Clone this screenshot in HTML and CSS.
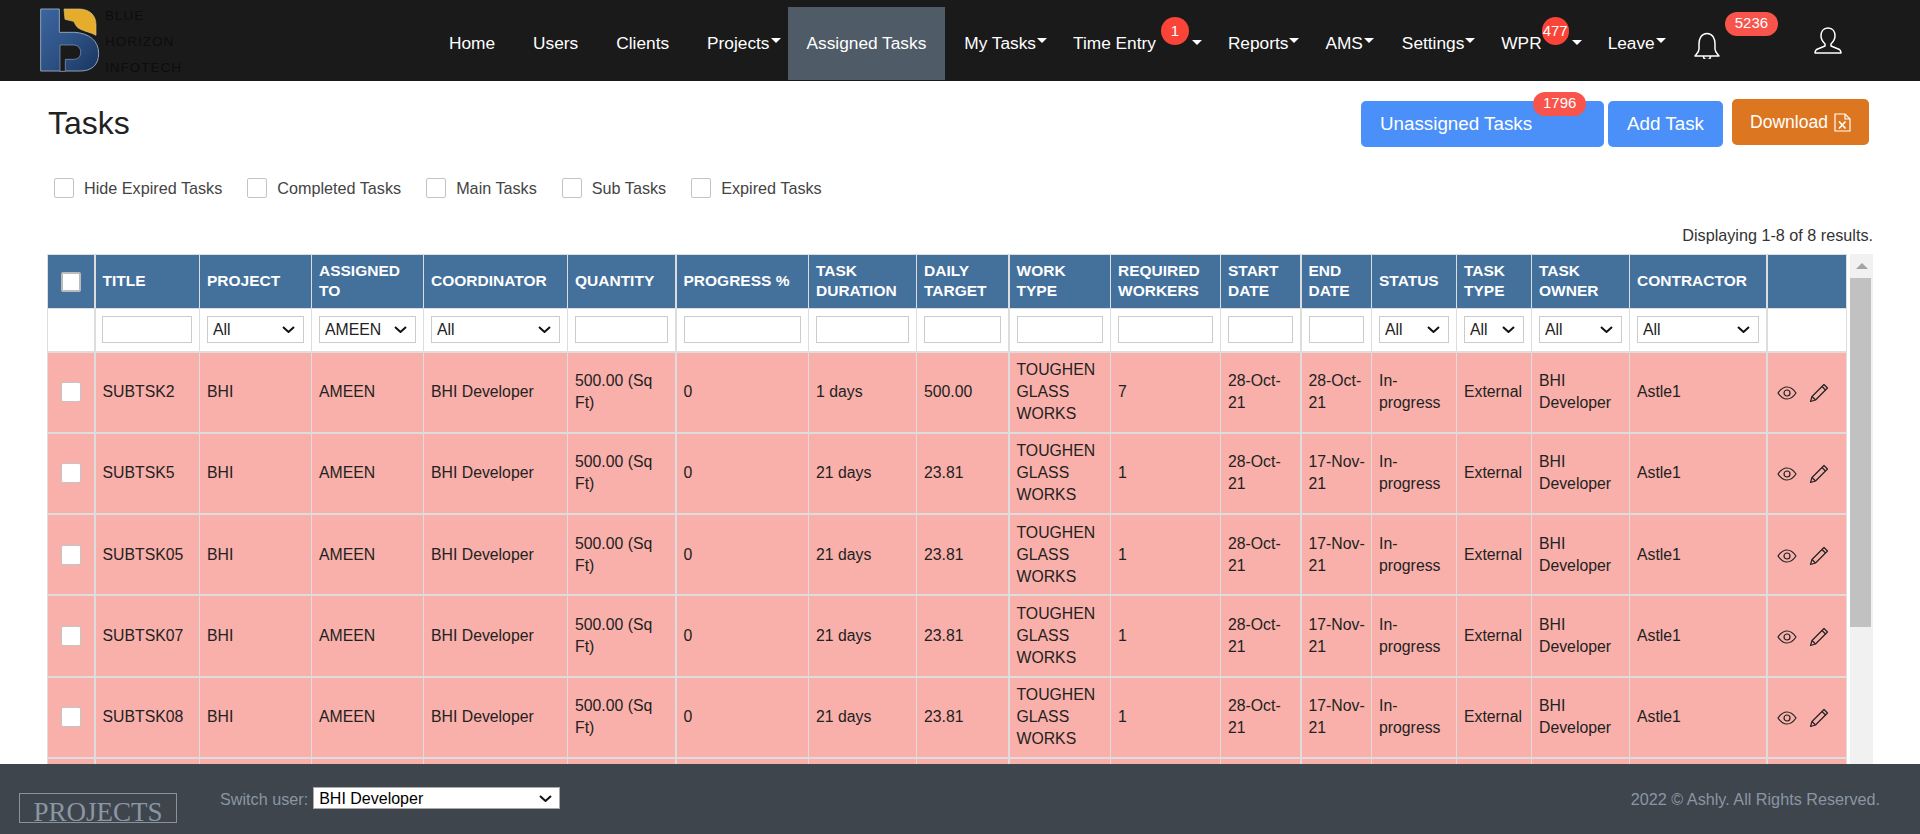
FILE: index.html
```html
<!DOCTYPE html>
<html lang="en">
<head>
<meta charset="utf-8">
<title>Tasks</title>
<link rel="stylesheet" href="styles.css">
</head>
<body>

<header class="topbar">
  <a class="logo" href="#">
    <svg class="logo-mark" viewBox="60 25 180 190" width="60" height="64">
      <defs>
        <linearGradient id="logoBlue" x1="0" y1="0" x2="1" y2="1">
          <stop offset="0" stop-color="#3c659f"/>
          <stop offset="0.55" stop-color="#2c5082"/>
          <stop offset="1" stop-color="#1a3560"/>
        </linearGradient>
      </defs>
      <path d="M62 27H118V97H165C205 100 236 120 236 160C236 195 215 213 180 213H62Z" fill="url(#logoBlue)" stroke="#8ea2ba" stroke-width="3"/>
      <path d="M120 135H160C174 135 182 145 182 157C182 170 174 178 160 178H136V214H120Z" fill="#1a1a1a" stroke="#8ea2ba" stroke-width="2"/>
      <path d="M132 27H180C212 29 228 48 228 75V106C212 96 190 94 175 84C166 78 165 68 160 64L135 58Z" fill="#e6ad2c" stroke="#d8c48c" stroke-width="2"/>
    </svg>
    <span class="logo-text">BLUE<br>HORIZON<br>INFOTECH</span>
  </a>
  <nav class="nav">
    <a class="nav-link" href="#">Home</a>
    <a class="nav-link" href="#">Users</a>
    <a class="nav-link" href="#">Clients</a>
    <a class="nav-link has-caret" href="#">Projects<i class="caret"></i></a>
    <a class="nav-link active" href="#">Assigned Tasks</a>
    <a class="nav-link has-caret" href="#">My Tasks<i class="caret"></i></a>
    <a class="nav-link has-caret" href="#">Time Entry<span class="nav-count time-count">1</span><i class="caret wide-caret"></i></a>
    <a class="nav-link has-caret" href="#">Reports<i class="caret"></i></a>
    <a class="nav-link has-caret ams-link" href="#">AMS<i class="caret"></i></a>
    <a class="nav-link has-caret" href="#">Settings<i class="caret"></i></a>
    <a class="nav-link has-caret" href="#">WPR<span class="nav-count wpr-count">477</span><i class="caret wide-caret"></i></a>
    <a class="nav-link has-caret" href="#">Leave<i class="caret"></i></a>
    <a class="bell" href="#">
      <svg viewBox="0 0 26 27" width="26" height="27" fill="none" stroke="#fff" stroke-width="1.5" stroke-linejoin="round">
        <path d="M13 1.5C7.5 1.5 5 6.5 5 12V17C5 20 3 21.500 1 24H25C23 21.500 21 20 21 17V12C21 6.500 18.500 1.500 13 1.500Z"/>
        <path d="M9.500 24C9.500 29 16.500 29 16.500 24"/>
      </svg>
      <span class="pill bell-count">5236</span>
    </a>
    <a class="user" href="#">
      <svg viewBox="0 0 28 27" width="28" height="27" fill="none" stroke="#fff" stroke-width="1.5" stroke-linejoin="round">
        <path d="M14 1C9 1 7 5 7 9C7 13 9 15 11 17V19L2.500 22.500C1.500 23.500 1 24.500 1 26H27C27 24.500 26.500 23.500 25.500 22.500L17 19V17C19 15 21 13 21 9C21 5 19 1 14 1Z"/>
      </svg>
    </a>
  </nav>
</header>

<main class="page">
  <div class="page-head">
    <h1>Tasks</h1>
    <div class="actions">
      <a class="btn btn-blue btn-unassigned" href="#">Unassigned Tasks<span class="pill btn-count">1796</span></a>
      <a class="btn btn-blue btn-add" href="#">Add Task</a>
      <a class="btn btn-orange" href="#">Download
        <svg viewBox="0 0 17 19" width="17" height="19" fill="none" stroke="#fff" stroke-width="1.2">
          <path d="M1 1H11L16 6V18H1Z"/>
          <path d="M11 1V6H16"/>
          <path d="M5 8.500L11.500 15.500M11.500 8.500L5 15.500" stroke-width="1.700"/>
        </svg>
      </a>
    </div>
  </div>

  <div class="filters">
    <label class="check"><input type="checkbox">Hide Expired Tasks</label>
    <label class="check"><input type="checkbox">Completed Tasks</label>
    <label class="check"><input type="checkbox">Main Tasks</label>
    <label class="check"><input type="checkbox">Sub Tasks</label>
    <label class="check"><input type="checkbox">Expired Tasks</label>
  </div>

  <p class="summary">Displaying 1-8 of 8 results.</p>

  <div class="grid-wrap">
    <table class="grid">
      <colgroup>
        <col class="c-check">
        <col class="c-title thick">
        <col class="c-project">
        <col class="c-assigned">
        <col class="c-coord">
        <col class="c-qty">
        <col class="c-progress thick">
        <col class="c-duration">
        <col class="c-target">
        <col class="c-work thick">
        <col class="c-workers">
        <col class="c-start">
        <col class="c-end thick">
        <col class="c-status">
        <col class="c-type">
        <col class="c-owner">
        <col class="c-contractor">
        <col class="c-actions thick">
      </colgroup>
      <thead>
        <tr class="head-row">
          <th class="center"><input type="checkbox"></th>
          <th>TITLE</th>
          <th>PROJECT</th>
          <th>ASSIGNED TO</th>
          <th>COORDINATOR</th>
          <th>QUANTITY</th>
          <th>PROGRESS %</th>
          <th>TASK DURATION</th>
          <th>DAILY TARGET</th>
          <th>WORK TYPE</th>
          <th>REQUIRED WORKERS</th>
          <th>START DATE</th>
          <th>END DATE</th>
          <th>STATUS</th>
          <th>TASK TYPE</th>
          <th>TASK OWNER</th>
          <th>CONTRACTOR</th>
          <th></th>
        </tr>
        <tr class="filter-row">
          <td></td>
          <td><input class="field title-field" type="text"></td>
          <td><select class="field"><option>All</option></select></td>
          <td><select class="field"><option>AMEEN</option></select></td>
          <td><select class="field"><option>All</option></select></td>
          <td><input class="field" type="text"></td>
          <td><input class="field" type="text"></td>
          <td><input class="field" type="text"></td>
          <td><input class="field" type="text"></td>
          <td><input class="field" type="text"></td>
          <td><input class="field" type="text"></td>
          <td><input class="field" type="text"></td>
          <td><input class="field" type="text"></td>
          <td><select class="field"><option>All</option></select></td>
          <td><select class="field"><option>All</option></select></td>
          <td><select class="field"><option>All</option></select></td>
          <td><select class="field"><option>All</option></select></td>
          <td></td>
        </tr>
      </thead>
      <tbody>
        <tr>
          <td class="center"><input type="checkbox"></td>
          <td>SUBTSK2</td><td>BHI</td><td>AMEEN</td><td>BHI Developer</td><td>500.00 (Sq Ft)</td><td>0</td>
          <td>1 days</td><td>500.00</td><td>TOUGHEN GLASS WORKS</td><td>7</td><td>28-Oct-21</td><td class="end-date">28-Oct-21</td>
          <td>In-progress</td><td>External</td><td>BHI Developer</td><td>Astle1</td>
          <td class="row-actions">
            <a href="#"><svg class="ico-eye" viewBox="0 0 20 14" width="20" height="14" fill="none" stroke="#222" stroke-width="1.200"><path d="M1 7C4 2.500 7 1 10 1S16 2.500 19 7C16 11.500 13 13 10 13S4 11.500 1 7Z"/><circle cx="10" cy="7" r="3"/></svg></a>
            <a href="#"><svg class="ico-pen" viewBox="0 0 20 20" width="20" height="20" fill="none" stroke="#222" stroke-width="1.200" stroke-linejoin="round"><path d="M15 1.500L18.500 5L6.500 17L1.500 18.500L3 13.500Z"/><path d="M13 3.500L16.500 7M3 13.500L6.500 17"/></svg></a>
          </td>
        </tr>
        <tr>
          <td class="center"><input type="checkbox"></td>
          <td>SUBTSK5</td><td>BHI</td><td>AMEEN</td><td>BHI Developer</td><td>500.00 (Sq Ft)</td><td>0</td>
          <td>21 days</td><td>23.81</td><td>TOUGHEN GLASS WORKS</td><td>1</td><td>28-Oct-21</td><td class="end-date">17-Nov-21</td>
          <td>In-progress</td><td>External</td><td>BHI Developer</td><td>Astle1</td>
          <td class="row-actions">
            <a href="#"><svg class="ico-eye" viewBox="0 0 20 14" width="20" height="14" fill="none" stroke="#222" stroke-width="1.200"><path d="M1 7C4 2.500 7 1 10 1S16 2.500 19 7C16 11.500 13 13 10 13S4 11.500 1 7Z"/><circle cx="10" cy="7" r="3"/></svg></a>
            <a href="#"><svg class="ico-pen" viewBox="0 0 20 20" width="20" height="20" fill="none" stroke="#222" stroke-width="1.200" stroke-linejoin="round"><path d="M15 1.500L18.500 5L6.500 17L1.500 18.500L3 13.500Z"/><path d="M13 3.500L16.500 7M3 13.500L6.500 17"/></svg></a>
          </td>
        </tr>
        <tr>
          <td class="center"><input type="checkbox"></td>
          <td>SUBTSK05</td><td>BHI</td><td>AMEEN</td><td>BHI Developer</td><td>500.00 (Sq Ft)</td><td>0</td>
          <td>21 days</td><td>23.81</td><td>TOUGHEN GLASS WORKS</td><td>1</td><td>28-Oct-21</td><td class="end-date">17-Nov-21</td>
          <td>In-progress</td><td>External</td><td>BHI Developer</td><td>Astle1</td>
          <td class="row-actions">
            <a href="#"><svg class="ico-eye" viewBox="0 0 20 14" width="20" height="14" fill="none" stroke="#222" stroke-width="1.200"><path d="M1 7C4 2.500 7 1 10 1S16 2.500 19 7C16 11.500 13 13 10 13S4 11.500 1 7Z"/><circle cx="10" cy="7" r="3"/></svg></a>
            <a href="#"><svg class="ico-pen" viewBox="0 0 20 20" width="20" height="20" fill="none" stroke="#222" stroke-width="1.200" stroke-linejoin="round"><path d="M15 1.500L18.500 5L6.500 17L1.500 18.500L3 13.500Z"/><path d="M13 3.500L16.500 7M3 13.500L6.500 17"/></svg></a>
          </td>
        </tr>
        <tr>
          <td class="center"><input type="checkbox"></td>
          <td>SUBTSK07</td><td>BHI</td><td>AMEEN</td><td>BHI Developer</td><td>500.00 (Sq Ft)</td><td>0</td>
          <td>21 days</td><td>23.81</td><td>TOUGHEN GLASS WORKS</td><td>1</td><td>28-Oct-21</td><td class="end-date">17-Nov-21</td>
          <td>In-progress</td><td>External</td><td>BHI Developer</td><td>Astle1</td>
          <td class="row-actions">
            <a href="#"><svg class="ico-eye" viewBox="0 0 20 14" width="20" height="14" fill="none" stroke="#222" stroke-width="1.200"><path d="M1 7C4 2.500 7 1 10 1S16 2.500 19 7C16 11.500 13 13 10 13S4 11.500 1 7Z"/><circle cx="10" cy="7" r="3"/></svg></a>
            <a href="#"><svg class="ico-pen" viewBox="0 0 20 20" width="20" height="20" fill="none" stroke="#222" stroke-width="1.200" stroke-linejoin="round"><path d="M15 1.500L18.500 5L6.500 17L1.500 18.500L3 13.500Z"/><path d="M13 3.500L16.500 7M3 13.500L6.500 17"/></svg></a>
          </td>
        </tr>
        <tr>
          <td class="center"><input type="checkbox"></td>
          <td>SUBTSK08</td><td>BHI</td><td>AMEEN</td><td>BHI Developer</td><td>500.00 (Sq Ft)</td><td>0</td>
          <td>21 days</td><td>23.81</td><td>TOUGHEN GLASS WORKS</td><td>1</td><td>28-Oct-21</td><td class="end-date">17-Nov-21</td>
          <td>In-progress</td><td>External</td><td>BHI Developer</td><td>Astle1</td>
          <td class="row-actions">
            <a href="#"><svg class="ico-eye" viewBox="0 0 20 14" width="20" height="14" fill="none" stroke="#222" stroke-width="1.200"><path d="M1 7C4 2.500 7 1 10 1S16 2.500 19 7C16 11.500 13 13 10 13S4 11.500 1 7Z"/><circle cx="10" cy="7" r="3"/></svg></a>
            <a href="#"><svg class="ico-pen" viewBox="0 0 20 20" width="20" height="20" fill="none" stroke="#222" stroke-width="1.200" stroke-linejoin="round"><path d="M15 1.500L18.500 5L6.500 17L1.500 18.500L3 13.500Z"/><path d="M13 3.500L16.500 7M3 13.500L6.500 17"/></svg></a>
          </td>
        </tr>
        <tr>
          <td></td><td></td><td></td><td></td><td></td><td></td><td></td><td></td><td></td>
          <td></td><td></td><td></td><td></td><td></td><td></td><td></td><td></td><td></td>
        </tr>
      </tbody>
    </table>
    <div class="scroll-track">
      <span class="scroll-up"></span>
      <span class="scroll-thumb"></span>
    </div>
  </div>
</main>

<footer class="footer">
  <span class="foot-brand">PROJECTS</span>
  <label class="switch-user">Switch user:
    <select class="switch-select"><option>BHI Developer</option></select>
  </label>
  <span class="copyright">2022 &copy; Ashly. All Rights Reserved.</span>
</footer>

</body>
</html>
```

FILE: styles.css
```css
* {box-sizing: border-box}
html, body {height: 100%}
body {
    margin: 0;
    display: flex;
    flex-direction: column;
    overflow: hidden;
    font-family: "Liberation Sans", Arial, sans-serif;
    font-size: 15.8px;
    color: #222;
    background: #fff;
}
a {color: inherit; text-decoration: none}

/* top bar */
.topbar {
    flex: none;
    height: 81px;
    display: flex;
    background: #1a1a1a;
}
.logo {
    display: flex;
    width: 430px;
    padding: 8px 0 0 40px;
}
.logo-mark {flex: none}
.logo-text {
    margin: -5px 0 0 5px;
    font-size: 13.5px;
    line-height: 26px;
    letter-spacing: 1px;
    color: #0d0d0d;
}
.nav {
    display: flex;
    align-items: stretch;
    height: 80px;
    color: #fff;
    font-size: 17.3px;
}
.nav-link {
    display: flex;
    align-items: center;
    margin-top: 7px;
    padding: 0 19px 1px;
}
.nav-link.has-caret {padding-right: 7px}
.nav-link.ams-link {padding-right: 9px}
.nav-link.active {background: #4f5b66}
.caret {
    width: 0;
    height: 0;
    margin: -5px 0 0 1px;
    border: 5px solid transparent;
    border-top-color: #fff;
    border-bottom: 0;
}
.wide-caret {margin-left: 2px; margin-top: -1px}
.nav-count {
    position: relative;
    top: -12px;
    height: 28px;
    margin: 0 1px 0 5px;
    padding: 0 5px;
    min-width: 28px;
    border-radius: 14px;
    background: #fb4438;
    font-size: 15px;
    line-height: 28px;
    text-align: center;
}
.wpr-count {margin: 0 1px 0 0; padding: 0; width: 27px; min-width: 27px}
.bell {
    position: relative;
    margin: 32px 0 0 21px;
    width: 26px;
}
.pill {
    position: absolute;
    height: 24px;
    padding: 0 10px;
    border-radius: 12px;
    background: #f9544b;
    color: #fff;
    font-size: 15px;
    font-weight: 400;
    line-height: 22px;
}
.bell-count {left: 31px; top: -20px}
.user {margin: 27px 0 0 94px}

/* page */
.page {
    flex: 1;
    min-height: 0;
    display: flex;
    flex-direction: column;
    padding: 0 47px 0 48px;
}
.page-head {
    flex: none;
    display: flex;
    justify-content: space-between;
    padding-top: 18px;
}
h1 {
    margin: 5px 0 0;
    font-size: 32px;
    font-weight: 400;
    line-height: 38px;
}
.actions {
    display: flex;
    align-items: flex-start;
    margin-right: 4px;
}
.btn {
    position: relative;
    display: flex;
    align-items: center;
    height: 46px;
    border-radius: 5px;
    color: #fff;
    font-size: 18.8px;
}
.btn-blue {margin-top: 2px; background: #4b8ff8}
.btn-unassigned {width: 243px; padding-left: 19px}
.btn-add {width: 115px; margin-left: 4px; justify-content: center}
.btn-orange {
    width: 137px;
    margin-left: 9px;
    justify-content: center;
    gap: 6px;
    background: #dd7620;
    font-size: 17.5px;
}
.btn-count {left: 172px; top: -9px}

/* filter checkboxes */
.filters {
    flex: none;
    display: flex;
    gap: 25px;
    margin: 31px 0 0 6px;
    color: #444;
    font-size: 16.2px;
}
.check {
    display: flex;
    align-items: center;
    gap: 10px;
    height: 20px;
}
input[type=checkbox] {
    appearance: none;
    width: 20px;
    height: 20px;
    margin: 0;
    border: 1px solid #c4c4c4;
    border-radius: 2px;
    background: #fff;
}
.summary {
    flex: none;
    margin: 27px 0 0;
    height: 29px;
    text-align: right;
    color: #333;
    font-size: 16.2px;
    line-height: 20px;
}

/* table */
.grid-wrap {
    flex: 1;
    min-height: 0;
    display: flex;
    align-items: flex-start;
    overflow: hidden;
    margin-left: -1px;
}
.grid {
    flex: none;
    width: 1799px;
    table-layout: fixed;
    border-collapse: collapse;
}
.grid th, .grid td {
    padding: 0 7px;
    border: 1px solid #ddd;
    text-align: left;
    vertical-align: middle;
}
.grid tbody td {
    height: 81.3px;
    border-bottom-width: 2px;
    background: #f9b0aa;
    line-height: 22px;
}
.grid tbody .end-date {padding-right: 3px}
.grid .center {padding: 0; text-align: center}
.grid input[type=checkbox] {display: block; margin: 0 auto}
.head-row th {
    height: 54px;
    padding-bottom: 2px;
    background: #44709c;
    color: #fff;
    font-size: 15.5px;
    font-weight: 700;
    line-height: 20px;
}
.head-row input[type=checkbox] {border: 2px solid #bbb}
.filter-row td {height: 43px; border-bottom-width: 2px; background: #fff}
.field {
    display: block;
    width: 100%;
    height: 27px;
    padding: 0 2px;
    border: 1px solid #ccc;
    border-radius: 0;
    background: #fff;
    font-family: inherit;
    font-size: 15.8px;
    color: #222;
}
select.field, .switch-select {
    appearance: none;
    padding-left: 5px;
    background: #fff url("data:image/svg+xml,%3Csvg xmlns='http://www.w3.org/2000/svg' width='13' height='7' viewBox='0 0 13 7'%3E%3Cpath d='M1 1l5.500 5 5.500-5' fill='none' stroke='%23111' stroke-width='2'/%3E%3C/svg%3E") no-repeat right 8px center;
}
.title-field {width: 90px; margin-left: -1px}
.row-actions a {display: inline-block; vertical-align: middle}
.row-actions {white-space: nowrap; padding-left: 9px !important}
.ico-eye {display: block; margin-right: 8px}
.ico-pen {display: block}

.c-check {width: 47px}
.c-title {width: 105px}
.c-project {width: 112px}
.c-assigned {width: 112px}
.c-coord {width: 144px}
.c-qty {width: 108px}
.c-progress {width: 133px}
.c-duration {width: 108px}
.c-target {width: 92px}
.c-work {width: 102px}
.c-workers {width: 110px}
.c-start {width: 80px}
.c-end {width: 71px}
.c-status {width: 85px}
.c-type {width: 75px}
.c-owner {width: 98px}
.c-contractor {width: 137px}
.c-actions {width: 80px}
col.thick {border-left: 2px solid #ddd}

/* drawn scrollbar */
.scroll-track {
    flex: none;
    width: 23px;
    height: 100%;
    margin-left: 3px;
    background: #f1f1f1;
}
.scroll-up {
    display: block;
    width: 0;
    margin: 9px auto 0;
    border: 6px solid transparent;
    border-bottom: 6px solid #a3a3a3;
    border-top: 0;
}
.scroll-thumb {
    display: block;
    height: 349px;
    margin: 9px 2px 0 0;
    background: #c1c1c1;
}

/* footer */
.footer {
    flex: none;
    height: 70px;
    display: flex;
    background: #3e454d;
    color: #8b96a3;
    font-size: 16.2px;
}
.foot-brand {
    width: 158px;
    height: 30px;
    margin: 29px 0 0 19px;
    border: 1px solid #8a919a;
    font-family: "Liberation Serif", "Times New Roman", serif;
    font-size: 27px;
    line-height: 36px;
    text-align: center;
}
.switch-user {
    display: flex;
    gap: 5px;
    height: 22px;
    margin: 24px 0 0 43px;
    line-height: 22px;
}
.switch-select {
    width: 247px;
    height: 22px;
    padding: 0 0 0 5px;
    margin-top: -1px;
    border: 1px solid #aaa;
    border-radius: 0;
    color: #000;
    font-family: inherit;
    font-size: 16px;
    background-position: right 7px center;
}
.copyright {margin: 24px 40px 0 auto; line-height: 22px}
```
